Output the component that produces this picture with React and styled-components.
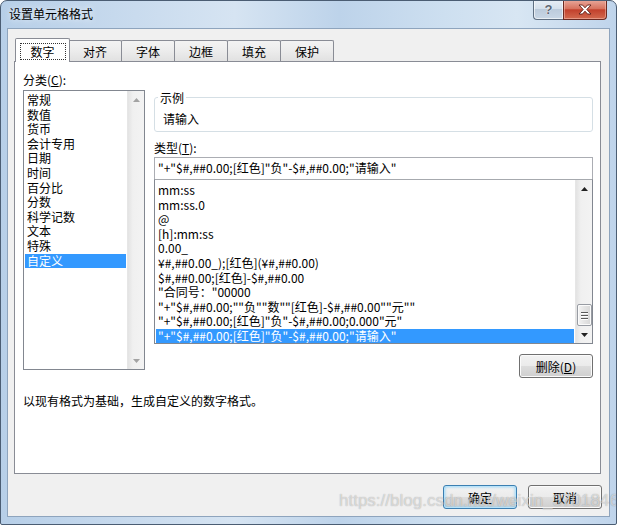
import styled, { createGlobalStyle } from "styled-components";

const GlobalStyle = createGlobalStyle`
  html, body {
    margin: 0;
    padding: 0;
    background: #ffffff;
  }
  * {
    box-sizing: border-box;
  }
`;

const categories = [
  "常规",
  "数值",
  "货币",
  "会计专用",
  "日期",
  "时间",
  "百分比",
  "分数",
  "科学记数",
  "文本",
  "特殊",
  "自定义",
];

const formats = [
  "mm:ss",
  "mm:ss.0",
  "@",
  "[h]:mm:ss",
  "0.00_",
  "¥#,##0.00_);[红色](¥#,##0.00)",
  "$#,##0.00;[红色]-$#,##0.00",
  "\"合同号：\"00000",
  "\"+\"$#,##0.00;\"\"负\"\"数\"\"[红色]-$#,##0.00\"\"元\"\"",
  "\"+\"$#,##0.00;[红色]\"负\"-$#,##0.00;0.000\"元\"",
  "\"+\"$#,##0.00;[红色]\"负\"-$#,##0.00;\"请输入\"",
];

const tabs = ["数字", "对齐", "字体", "边框", "填充", "保护"];

const Arrow = ({ down, disabled }) => (
  <svg width="7" height="4" viewBox="0 0 7 4">
    <polygon
      points={down ? "0,0 7,0 3.5,4" : "0,4 7,4 3.5,0"}
      fill={disabled ? "#a3a3a3" : "#222"}
    />
  </svg>
);

const CloseIcon = () => (
  <svg width="14" height="11" viewBox="0 0 14 11">
    <path
      d="M1 1 L4.5 1 L7 3.8 L9.5 1 L13 1 L8.8 5.5 L13 10 L9.5 10 L7 7.2 L4.5 10 L1 10 L5.2 5.5 Z"
      fill="#ffffff"
      stroke="#5a1d16"
      strokeWidth="0.9"
      strokeLinejoin="round"
    />
  </svg>
);

const ScrollBar = ({ withThumb }) => (
  <Track>
    <ArrowBox>
      <Arrow disabled={!withThumb} />
    </ArrowBox>
    <TrackSpace>
      {withThumb && (
        <Thumb>
          <Grip />
          <Grip />
          <Grip />
        </Thumb>
      )}
    </TrackSpace>
    <ArrowBox>
      <Arrow down disabled={!withThumb} />
    </ArrowBox>
  </Track>
);

const App = () => {
  return (
    <>
      <GlobalStyle />
      <Window>
        <TitleBar>
          <Title>设置单元格格式</Title>
          <CaptionButtons>
            <HelpButton>?</HelpButton>
            <CloseButton>
              <CloseIcon />
            </CloseButton>
          </CaptionButtons>
        </TitleBar>

        <Client>
          <TabStrip>
            {tabs.map((t, i) => (
              <Tab key={t} $active={i === 0}>
                {i === 0 ? <FocusRect>{t}</FocusRect> : t}
              </Tab>
            ))}
          </TabStrip>

          <Panel>
            <Columns>
              <LeftColumn>
                <Label>
                  分类(<u>C</u>):
                </Label>
                <CategoryList>
                  <Items>
                    {categories.map((c, i) => (
                      <Item key={c} $selected={i === categories.length - 1}>
                        {c}
                      </Item>
                    ))}
                  </Items>
                  <ScrollBar />
                </CategoryList>
              </LeftColumn>

              <RightColumn>
                <GroupBox>
                  <Legend>示例</Legend>
                  <SampleValue>请输入</SampleValue>
                </GroupBox>
                <TypeLabel>
                  类型(<u>T</u>):
                </TypeLabel>
                <TypeInput>
                  {"\"+\"$#,##0.00;[红色]\"负\"-$#,##0.00;\"请输入\""}
                </TypeInput>
                <FormatList>
                  <Items $top={3}>
                    {formats.map((f, i) => (
                      <Item key={f} $selected={i === formats.length - 1}>
                        {f}
                      </Item>
                    ))}
                  </Items>
                  <ScrollBar withThumb />
                </FormatList>
                <DeleteRow>
                  <Button>
                    删除(<u>D</u>)
                  </Button>
                </DeleteRow>
              </RightColumn>
            </Columns>

            <Description>以现有格式为基础，生成自定义的数字格式。</Description>
          </Panel>

          <Footer>
            <Button $default>确定</Button>
            <Button>取消</Button>
          </Footer>
        </Client>

        <Watermark>https://blog.csdn.net/weixin_37018468</Watermark>
      </Window>
    </>
  );
};

export default App;

const Window = styled.div`
  position: relative;
  width: 617px;
  height: 525px;
  display: flex;
  flex-direction: column;
  border: 1px solid #4b5d73;
  border-radius: 7px 7px 2px 2px;
  overflow: hidden;
  background: linear-gradient(
      to right,
      #b7cfe8 0%,
      #c9dbee 22%,
      #d6e4f2 38%,
      #bdd3ea 55%,
      #cddff0 72%,
      #d8e6f3 84%,
      #bfd4eb 100%
    );
  font-family: "Noto Sans CJK SC", "Liberation Sans", sans-serif;
  font-size: 12px;
  color: #000;
`;

const TitleBar = styled.div`
  display: flex;
  align-items: flex-start;
  height: 27px;
  padding: 0 9px 0 8px;
`;

const Title = styled.div`
  line-height: 26px;
  font-size: 12px;
  color: #000;
  text-shadow: 0 0 6px rgba(255, 255, 255, 0.9);
`;

const CaptionButtons = styled.div`
  display: flex;
  margin-left: auto;
  margin-top: -1px;
`;

const HelpButton = styled.div`
  width: 30px;
  height: 20px;
  display: flex;
  align-items: center;
  justify-content: center;
  border: 1px solid #5f6f82;
  border-right: none;
  border-top: none;
  border-radius: 0 0 0 4px;
  background: linear-gradient(#e7eef6 0%, #d5e0ec 45%, #bccbdc 50%, #c9d7e6 100%);
  box-shadow: inset 0 0 0 1px rgba(255, 255, 255, 0.6);
  font-family: "Liberation Sans", sans-serif;
  font-weight: bold;
  font-size: 13px;
  color: #5b6675;
  text-shadow: 0 0 1px #fff, 0 0 1px #fff;
`;

const CloseButton = styled.div`
  width: 44px;
  height: 20px;
  display: flex;
  align-items: center;
  justify-content: center;
  border: 1px solid #6b2a22;
  border-top: none;
  border-radius: 0 0 4px 0;
  background: linear-gradient(#e9a99c 0%, #d7735f 45%, #c2412c 52%, #d26a4f 100%);
  box-shadow: inset 0 0 0 1px rgba(255, 210, 200, 0.45);
`;

const Client = styled.div`
  display: flex;
  flex-direction: column;
  margin: 0 6px 7px 6px;
  height: 489px;
  padding: 9px 8px 0 6px;
  background: #f0f0f0;
  border: 1px solid #8ea4bd;
`;

const TabStrip = styled.div`
  position: relative;
  z-index: 1;
  display: flex;
  align-items: flex-end;
  height: 24px;
  padding-left: 1px;
`;

const Tab = styled.div`
  display: flex;
  align-items: center;
  justify-content: center;
  width: ${({ $active }) => ($active ? "55px" : "54px")};
  height: ${({ $active }) => ($active ? "24px" : "21px")};
  margin-bottom: ${({ $active }) => ($active ? "0" : "1px")};
  margin-left: ${({ $active }) => ($active ? "0" : "-1px")};
  margin-right: ${({ $active }) => ($active ? "-2px" : "0")};
  border: 1px solid #898c95;
  border-bottom: none;
  border-radius: 2px 2px 0 0;
  background: ${({ $active }) =>
    $active
      ? "#ffffff"
      : "linear-gradient(#f3f3f3 0%, #ececec 50%, #e1e1e1 100%)"};
  z-index: ${({ $active }) => ($active ? 2 : 0)};
  line-height: 15px;
  padding-top: ${({ $active }) => ($active ? "2px" : "0")};

  &:nth-child(2) {
    margin-left: 0;
  }
`;

const FocusRect = styled.span`
  display: flex;
  align-items: center;
  justify-content: center;
  width: 46px;
  height: 17px;
  border: 1px dotted #333;
`;

const Panel = styled.div`
  display: flex;
  flex-direction: column;
  height: 413px;
  margin-top: -1px;
  padding: 10px 7px 0 8px;
  background: #ffffff;
  border: 1px solid #898c95;
`;

const Columns = styled.div`
  display: grid;
  grid-template-columns: 122px 1fr;
  column-gap: 9px;
  align-items: start;
`;

const LeftColumn = styled.div`
  display: flex;
  flex-direction: column;
`;

const RightColumn = styled.div`
  display: flex;
  flex-direction: column;
`;

const Label = styled.div`
  line-height: 15px;
  height: 15px;
  margin-bottom: 3px;

  u {
    text-decoration-thickness: 1px;
    text-underline-offset: 1px;
  }
`;

const CategoryList = styled.div`
  display: flex;
  height: 280px;
  border: 1px solid #828790;
  background: #fff;
`;

const FormatList = styled.div`
  display: flex;
  height: 165px;
  border: 1px solid #828790;
  border-top-color: #a6a9ae;
  background: #fff;
`;

const Items = styled.div`
  flex: 1;
  display: flex;
  flex-direction: column;
  padding: ${({ $top }) => $top ?? 2}px 1px 0 1px;
  overflow: hidden;
`;

const Item = styled.div`
  height: 14.6px;
  line-height: 14.6px;
  padding-left: 2px;
  white-space: nowrap;
  color: ${({ $selected }) => ($selected ? "#ffffff" : "#000")};
  background: ${({ $selected }) => ($selected ? "#3399ff" : "transparent")};
`;

const Track = styled.div`
  width: 17px;
  display: flex;
  flex-direction: column;
  background: linear-gradient(to right, #e3e3e3, #f0f0f0 30%, #f3f3f3);
  border-left: 1px solid #e6e6e6;
`;

const ArrowBox = styled.div`
  height: 17px;
  display: flex;
  align-items: center;
  justify-content: center;
`;

const TrackSpace = styled.div`
  flex: 1;
  display: flex;
  flex-direction: column;
  justify-content: flex-end;
`;

const Thumb = styled.div`
  height: 22px;
  margin: 0 0 0 1px;
  display: flex;
  flex-direction: column;
  align-items: center;
  justify-content: center;
  gap: 2px;
  border: 1px solid #989ca3;
  border-radius: 2px;
  background: linear-gradient(to right, #f4f4f4, #e4e4e4 50%, #d8d8d8);
  box-shadow: inset 0 0 0 1px #fbfbfb;
`;

const Grip = styled.div`
  width: 7px;
  height: 1px;
  background: #5a5a5a;
  box-shadow: 0 1px 0 #fff;
`;

const GroupBox = styled.div`
  position: relative;
  height: 35px;
  margin-top: 25px;
  padding: 13px 0 0 8px;
  border: 1px solid #d5dfe5;
  border-radius: 3px;
  box-shadow: inset 1px 1px 0 #fff;
`;

const Legend = styled.div`
  position: absolute;
  left: 3px;
  top: -8px;
  padding: 0 2px;
  line-height: 15px;
  background: #fff;
  color: #000;
`;

const SampleValue = styled.div`
  line-height: 15px;
`;

const TypeLabel = styled(Label)`
  margin-top: 8px;
  margin-bottom: 2px;
`;

const TypeInput = styled.div`
  height: 22px;
  line-height: 19px;
  padding-left: 3px;
  border: 1px solid #abadb3;
  border-bottom: none;
  white-space: nowrap;
`;

const DeleteRow = styled.div`
  display: flex;
  justify-content: flex-end;
  margin-top: 10px;
`;

const Button = styled.div`
  width: 74px;
  height: 24px;
  display: flex;
  align-items: center;
  justify-content: center;
  border: 1px solid ${({ $default }) => ($default ? "#3c7fb1" : "#707070")};
  border-radius: 3px;
  background: linear-gradient(#f2f2f2 0%, #ebebeb 50%, #dddddd 51%, #cfcfcf 100%);
  box-shadow: ${({ $default }) =>
    $default
      ? "inset 0 0 0 1px #b6e3fb, inset 0 0 3px 1px #8fd0f3"
      : "inset 0 0 0 1px #fbfbfb"};
  line-height: 15px;

  u {
    text-underline-offset: 1px;
  }
`;

const Description = styled.div`
  margin-top: 15px;
  line-height: 15px;
`;

const Footer = styled.div`
  display: flex;
  justify-content: flex-end;
  gap: 11px;
  padding-top: 11px;
  margin-right: -1px;
`;

const Watermark = styled.div`
  position: absolute;
  left: 338px;
  top: 490px;
  font-family: "Liberation Sans", sans-serif;
  font-size: 17px;
  color: rgba(255, 255, 255, 0.55);
  text-shadow: 0 0 1px rgba(0, 0, 0, 0.35);
  pointer-events: none;
  white-space: nowrap;
`;
